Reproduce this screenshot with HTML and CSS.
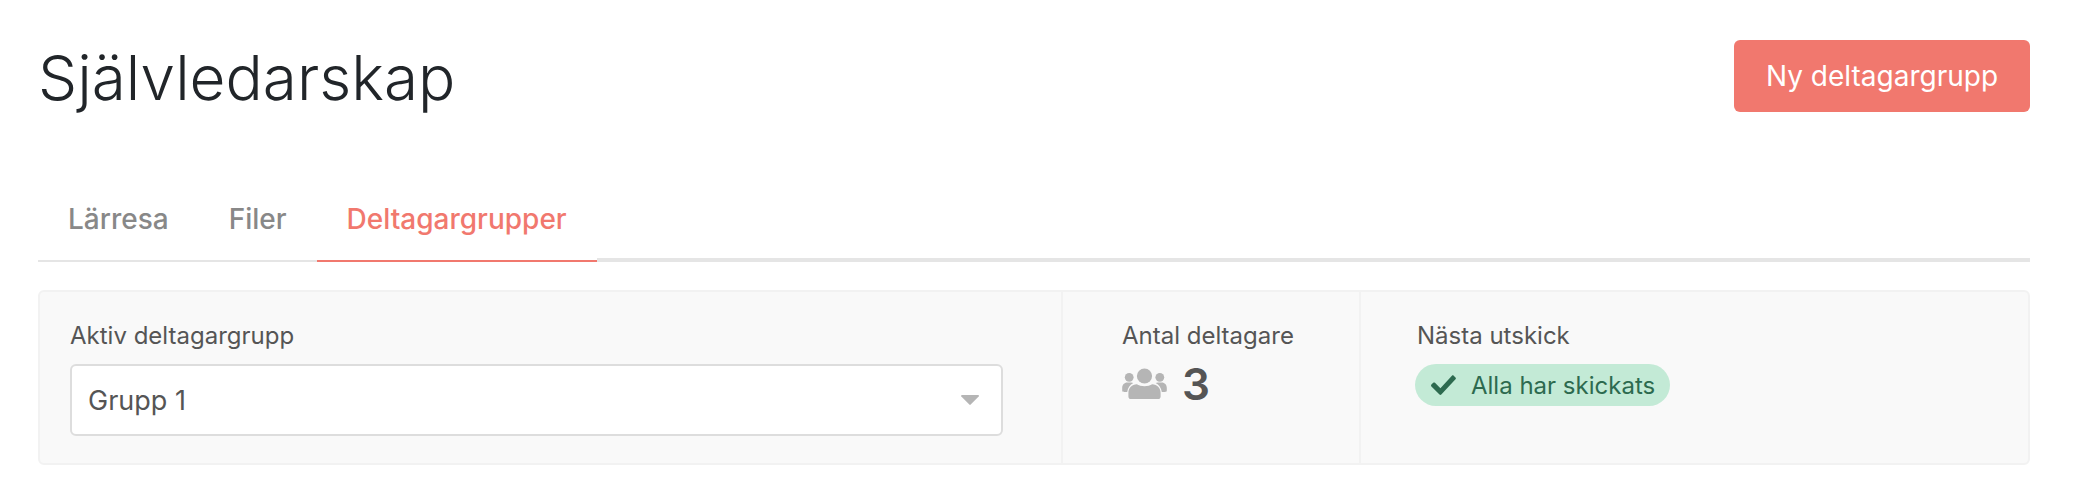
FILE: index.html
```html
<!DOCTYPE html>
<html lang="sv">
<head>
  <meta charset="UTF-8" />
  <meta name="viewport" content="width=device-width, initial-scale=1.0" />
  <title>Självledarskap</title>
  <link rel="stylesheet" href="styles.css">
</head>
<body>

  <div class="page">
    <header class="top">
      <h1>Självledarskap</h1>
      <a class="btn" href="#">Ny deltagargrupp</a>
    </header>

    <nav class="tabs">
      <a href="#">Lärresa</a>
      <a href="#">Filer</a>
      <a class="active" href="#">Deltagargrupper</a>
      <span class="tabs-rest"></span>
    </nav>

    <section class="card">
      <div class="cell cell-group">
        <div class="cell-label">Aktiv deltagargrupp</div>
        <div class="select">
          <span>Grupp 1</span>
          <svg class="caret" width="18" height="10" viewBox="0 0 18 10"><path d="M1 0h16c.8 0 1.2.9.7 1.5L9.7 9.6c-.4.4-1 .4-1.4 0L.3 1.5C-.2.9.2 0 1 0z"/></svg>
        </div>
      </div>
      <div class="cell cell-count">
        <div class="cell-label">Antal deltagare</div>
        <div class="count">
          <svg class="people" width="45" height="32" viewBox="0 0 45 32">
            <circle cx="22.5" cy="8" r="7.6"/>
            <circle cx="7.2" cy="9.3" r="4.4"/>
            <circle cx="37.8" cy="9.3" r="4.4"/>
            <path d="M9 31c-1.6 0-2.6-1-2.6-2.6v-3.6c0-5 3.6-8.6 8.4-8.6 2 1.2 4.6 2 7.7 2s5.7-.8 7.7-2c4.800 0 8.400 3.600 8.400 8.600v3.600c0 1.600-1 2.600-2.600 2.600z"/>
            <path d="M.2 22.500v-2.700c0-3 2.200-5.300 5-5.300h4c.8 0 1.500.2 2.100.5-3.200 1.700-5.500 4.800-6.100 8.900H2.400c-1.300 0-2.200-.2-2.200-1.400z"/>
            <path d="M44.800 22.500v-2.700c0-3-2.200-5.300-5-5.300h-4c-.8 0-1.500.2-2.100.5 3.200 1.700 5.500 4.800 6.100 8.900h2.800c1.300 0 2.200-.2 2.200-1.400z"/>
          </svg>
          <span class="count-num">3</span>
        </div>
      </div>
      <div class="cell cell-next">
        <div class="cell-label">Nästa utskick</div>
        <span class="badge">
          <svg class="check" width="25" height="20" viewBox="0 0 25 20"><path d="M8.500 19.500.4 11.400c-.5-.5-.5-1.300 0-1.800l1.800-1.800c.5-.5 1.300-.5 1.800 0l5.400 5.400L20.900.7c.5-.5 1.300-.5 1.800 0l1.800 1.800c.5.500.5 1.300 0 1.800L10.300 19.500c-.5.500-1.300.500-1.800 0z"/></svg>
          Alla har skickats
        </span>
      </div>
    </section>
  </div>

</body>
</html>
```

FILE: styles.css
```css
body {
  font-family: 'Inter', 'Liberation Sans', sans-serif;
  margin: 0;
  background: #fff;
  color: #555;
}
.page {
  padding: 40px 48px 0 38px;
}
.top {
  display: flex;
  align-items: flex-start;
  justify-content: space-between;
  height: 144px;
}
h1 {
  margin: 0;
  font-size: 62px;
  font-weight: 300;
  line-height: 76px;
  color: #212529;
}
.btn {
  display: block;
  box-sizing: border-box;
  width: 296px;
  height: 72px;
  line-height: 72px;
  text-align: center;
  background: #f1786e;
  color: #fff;
  font-size: 28px;
  text-decoration: none;
  border-radius: 6px;
}
.tabs {
  display: flex;
  align-items: flex-end;
  height: 78px;
}
.tabs a {
  box-sizing: border-box;
  height: 78px;
  padding: 0 30px;
  line-height: 70px;
  font-size: 28px;
  font-weight: 500;
  color: #888;
  text-decoration: none;
  border-bottom: 2px solid #e5e5e5;
}
.tabs a.active {
  color: #f1786e;
  border-bottom-color: #f1786e;
}
.tabs-rest {
  flex: 1;
  border-bottom: 4px solid #e5e5e5;
}
.card {
  display: flex;
  box-sizing: border-box;
  height: 175px;
  margin-top: 28px;
  background: #f9f9f9;
  border: 2px solid #f2f2f2;
  border-radius: 6px;
}
.cell {
  box-sizing: border-box;
  padding-top: 26px;
  border-right: 2px solid #f2f2f2;
}
.cell-group {
  width: 1023px;
  padding-left: 30px;
}
.cell-count {
  width: 298px;
  padding-left: 59px;
}
.cell-next {
  flex: 1;
  padding-left: 56px;
  border-right: 0;
}
.cell-label {
  font-size: 24px;
  line-height: 36px;
  color: #555;
}
.select {
  display: flex;
  align-items: center;
  justify-content: space-between;
  box-sizing: border-box;
  width: 933px;
  height: 72px;
  margin-top: 10px;
  padding: 0 22px 0 16px;
  background: #fff;
  border: 2px solid #ddd;
  border-radius: 6px;
  font-size: 27px;
  color: #555;
}
.caret {
  fill: #b5b5b5;
}
.count {
  display: flex;
  align-items: center;
  gap: 15px;
  height: 46px;
  margin-top: 7px;
}
.people {
  fill: #b5b5b5;
}
.count-num {
  font-size: 44px;
  font-weight: 600;
  color: #555;
}
.badge {
  display: inline-flex;
  align-items: center;
  gap: 15px;
  height: 42px;
  margin-top: 10px;
  margin-left: -2px;
  padding: 0 15px 0 16px;
  background: #c3ead6;
  color: #2d6a4f;
  font-size: 24px;
  border-radius: 21px;
}
.check {
  fill: #2d6a4f;
}
```
